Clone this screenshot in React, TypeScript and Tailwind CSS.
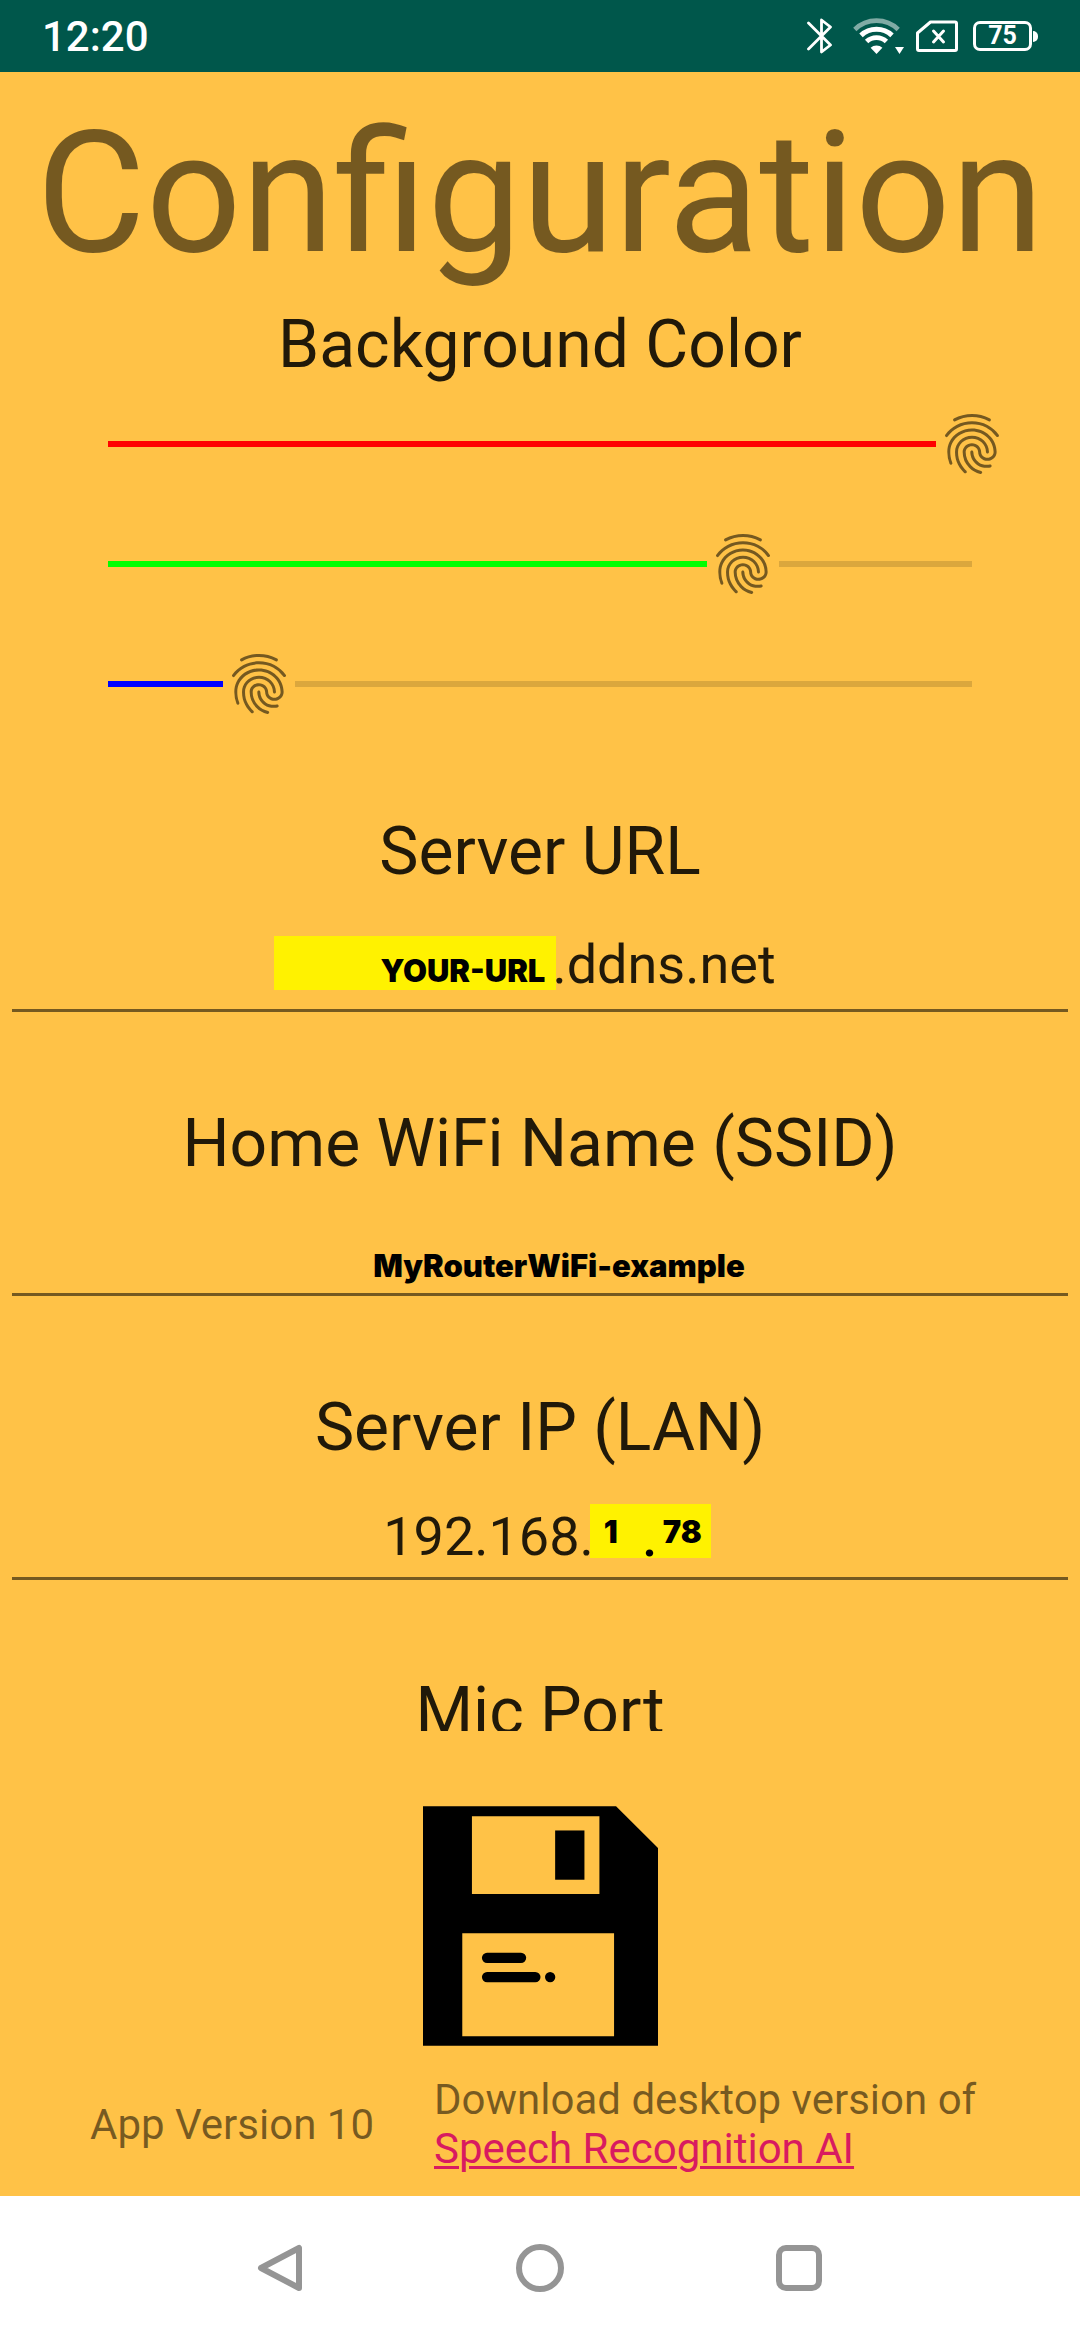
import { useState, type ReactNode } from "react";
import { MdFingerprint } from "react-icons/md";

const highlightInput =
  "bg-transparent p-0 font-['Inter',sans-serif] text-[31px] leading-[38px] font-black text-black outline-none";

function StatusBar() {
  return (
    <header className="flex h-[72px] shrink-0 items-center justify-between bg-[#00574b] px-[42px] text-white">
      <span className="pt-px text-[42px] leading-[50px] font-medium">12:20</span>
      <div className="flex items-center">
        <svg className="h-9 w-[26px]" viewBox="0 0 26 36" fill="none" stroke="currentColor" aria-label="Bluetooth">
          <path d="M1.5 5 23.5 27 14.5 34V2L23.5 9 1.5 31" strokeWidth="2.8" strokeLinejoin="round" strokeLinecap="round" />
        </svg>
        <svg className="ml-5 h-9 w-[52px]" viewBox="0 0 52 36" fill="none" stroke="currentColor" aria-label="Wi-Fi">
          <path d="M1.8 11.5a31 31 0 0 1 43.4 0" strokeWidth="4.6" opacity=".5" />
          <path d="M8 17.4a22.6 22.6 0 0 1 31 0" strokeWidth="5" />
          <path d="M13.6 23.6a14.4 14.4 0 0 1 19.8 0" strokeWidth="4.8" />
          <path d="M23.5 36 17.6 29.8a8.6 8.6 0 0 1 11.8 0Z" fill="currentColor" stroke="none" />
          <path d="M42 29h9l-4.5 7Z" fill="currentColor" stroke="none" />
        </svg>
        <svg className="ml-[11px] h-8 w-[42px]" viewBox="0 0 42 32" fill="none" stroke="currentColor" aria-label="No SIM">
          <path d="M14.5 2H39a1.5 1.5 0 0 1 1.5 1.5V29a1.5 1.5 0 0 1-1.5 1.5H3A1.5 1.5 0 0 1 1.5 29V13Z" strokeWidth="3" strokeLinejoin="round" />
          <path d="m17.5 11 10 11m0-11-10 11" strokeWidth="3" strokeLinecap="round" />
        </svg>
        <div className="ml-[15px] flex h-[30px] w-[59px] items-center justify-center rounded-[7px] border-[3px] border-white text-[25px] leading-6 font-bold">
          75
        </div>
        <div className="ml-px h-[11px] w-[5px] rounded-r-full bg-white" />
      </div>
    </header>
  );
}

function ColorSlider({ label, color, initial }: { label: string; color: string; initial: number }) {
  const [value, setValue] = useState(initial);
  return (
    <div className="relative flex h-[120px] items-center">
      <span className={`h-[6px] shrink-0 ${color}`} style={{ width: `calc(${value / 10}% - 36px)` }} />
      <MdFingerprint className="size-[72px] shrink-0 text-black/54" />
      <span className="h-[6px] flex-1 bg-[#dba73d]" />
      <input
        type="range"
        aria-label={label}
        min={0}
        max={1000}
        value={value}
        onChange={(e) => setValue(Number(e.target.value))}
        className="absolute inset-0 m-0 size-full cursor-pointer opacity-0"
      />
    </div>
  );
}

function Heading({ children, htmlFor }: { children: ReactNode; htmlFor?: string }) {
  return (
    <h2 className="text-center text-[66px] leading-[78px] text-black/87">
      {htmlFor ? <label htmlFor={htmlFor}>{children}</label> : children}
    </h2>
  );
}

function SaveIcon() {
  return (
    <svg className="h-[240px] w-[235px]" viewBox="0 0 706 720" aria-hidden="true">
      <path
        fillRule="evenodd"
        d="M0 0H580L706 126V720H0ZM147 30V264H530V30ZM118 382V691H574V382Z"
      />
      <rect x="397" y="73" width="88" height="148" />
      <rect x="177" y="440" width="133" height="31" rx="15.5" />
      <rect x="177" y="498" width="176" height="31" rx="15.5" />
      <circle cx="382" cy="513.5" r="15.5" />
    </svg>
  );
}

function NavBar() {
  return (
    <nav className="flex h-36 shrink-0 justify-center bg-white text-[#959595]">
      <div className="grid w-[72%] grid-cols-3">
        <button type="button" aria-label="Back" className="flex items-center justify-center">
          <svg className="size-12" viewBox="0 0 48 48" fill="none" stroke="currentColor" strokeWidth="6" strokeLinejoin="round">
            <path d="M42 4V44L4 24Z" />
          </svg>
        </button>
        <button type="button" aria-label="Home" className="flex items-center justify-center">
          <span className="size-12 rounded-full border-[6px] border-current" />
        </button>
        <button type="button" aria-label="Recent apps" className="flex items-center justify-center">
          <span className="size-[46px] rounded-[10px] border-[6px] border-current" />
        </button>
      </div>
    </nav>
  );
}

export default function App() {
  return (
    <div className="flex h-screen flex-col bg-[#ffc247] font-['Roboto',sans-serif]">
      <StatusBar />
      <main className="flex min-h-0 flex-1 flex-col">
        <h1 className="pt-[14px] text-center text-[168px] leading-[216px] text-black/54">Configuration</h1>
        <div className="min-h-0 flex-1 overflow-hidden pt-1">
          <Heading>Background Color</Heading>
          <div className="px-[10%]">
            <ColorSlider label="Red" color="bg-[#ff0000]" initial={1000} />
            <ColorSlider label="Green" color="bg-[#00ff00]" initial={735} />
            <ColorSlider label="Blue" color="bg-[#0000ff]" initial={175} />
          </div>

          <div className="flex flex-col gap-[93px] px-3 pt-[69px]">
            <section>
              <Heading htmlFor="server-url">Server URL</Heading>
              <div className="flex h-[121px] items-end justify-center border-b-[3px] border-black/54 pr-[30px]">
                <input
                  id="server-url"
                  defaultValue="YOUR-URL"
                  className="mb-[19px] h-[54px] w-[282px] bg-[#fff200] p-0 pt-[14px] pr-[11px] text-right font-['Inter',sans-serif] text-[31px] leading-[38px] font-black text-black outline-none"
                />
                <span className="mb-3 -ml-1 text-[54px] leading-[64px] text-black/87">.ddns.net</span>
              </div>
            </section>

            <section>
              <Heading htmlFor="ssid">Home WiFi Name (SSID)</Heading>
              <div className="flex h-[113px] items-end border-b-[3px] border-black/54 pb-2 pl-[38px]">
                <input id="ssid" defaultValue="MyRouterWiFi-example" className={`w-full text-center ${highlightInput}`} />
              </div>
            </section>

            <section>
              <Heading htmlFor="server-ip">Server IP (LAN)</Heading>
              <div className="flex h-[113px] items-end justify-center border-b-[3px] border-black/54 pl-[14px]">
                <span className="mb-2 text-[54px] leading-[64px] text-black/87">192.168.</span>
                <div className="mb-[19px] -ml-1 flex h-[54px] w-[121px] items-center justify-between bg-[#fff200] pt-[2px] pr-[9px] pl-[14px]">
                  <input id="server-ip" defaultValue="1" className={`w-9 ${highlightInput}`} />
                  <span className="self-end text-[54px] leading-[41px] font-medium text-black">.</span>
                  <input aria-label="Host part" defaultValue="78" className={`w-[42px] text-right ${highlightInput}`} />
                </div>
              </div>
            </section>

            <Heading>Mic Port</Heading>
          </div>
        </div>

        <div className="flex shrink-0 justify-center pt-[75px]">
          <button type="button" aria-label="Save">
            <SaveIcon />
          </button>
        </div>

        <footer className="grid shrink-0 grid-cols-[2fr_3fr] items-center pt-[29px] pb-[23px] text-[42px] leading-[49px] text-black/54">
          <p className="pl-8 text-center">App Version 10</p>
          <p className="pl-[2px]">
            Download desktop version of
            <br />
            <a href="#download" className="text-[#d81b60] underline decoration-[3px] underline-offset-[3px]">
              Speech Recognition AI
            </a>
          </p>
        </footer>
      </main>
      <NavBar />
    </div>
  );
}
